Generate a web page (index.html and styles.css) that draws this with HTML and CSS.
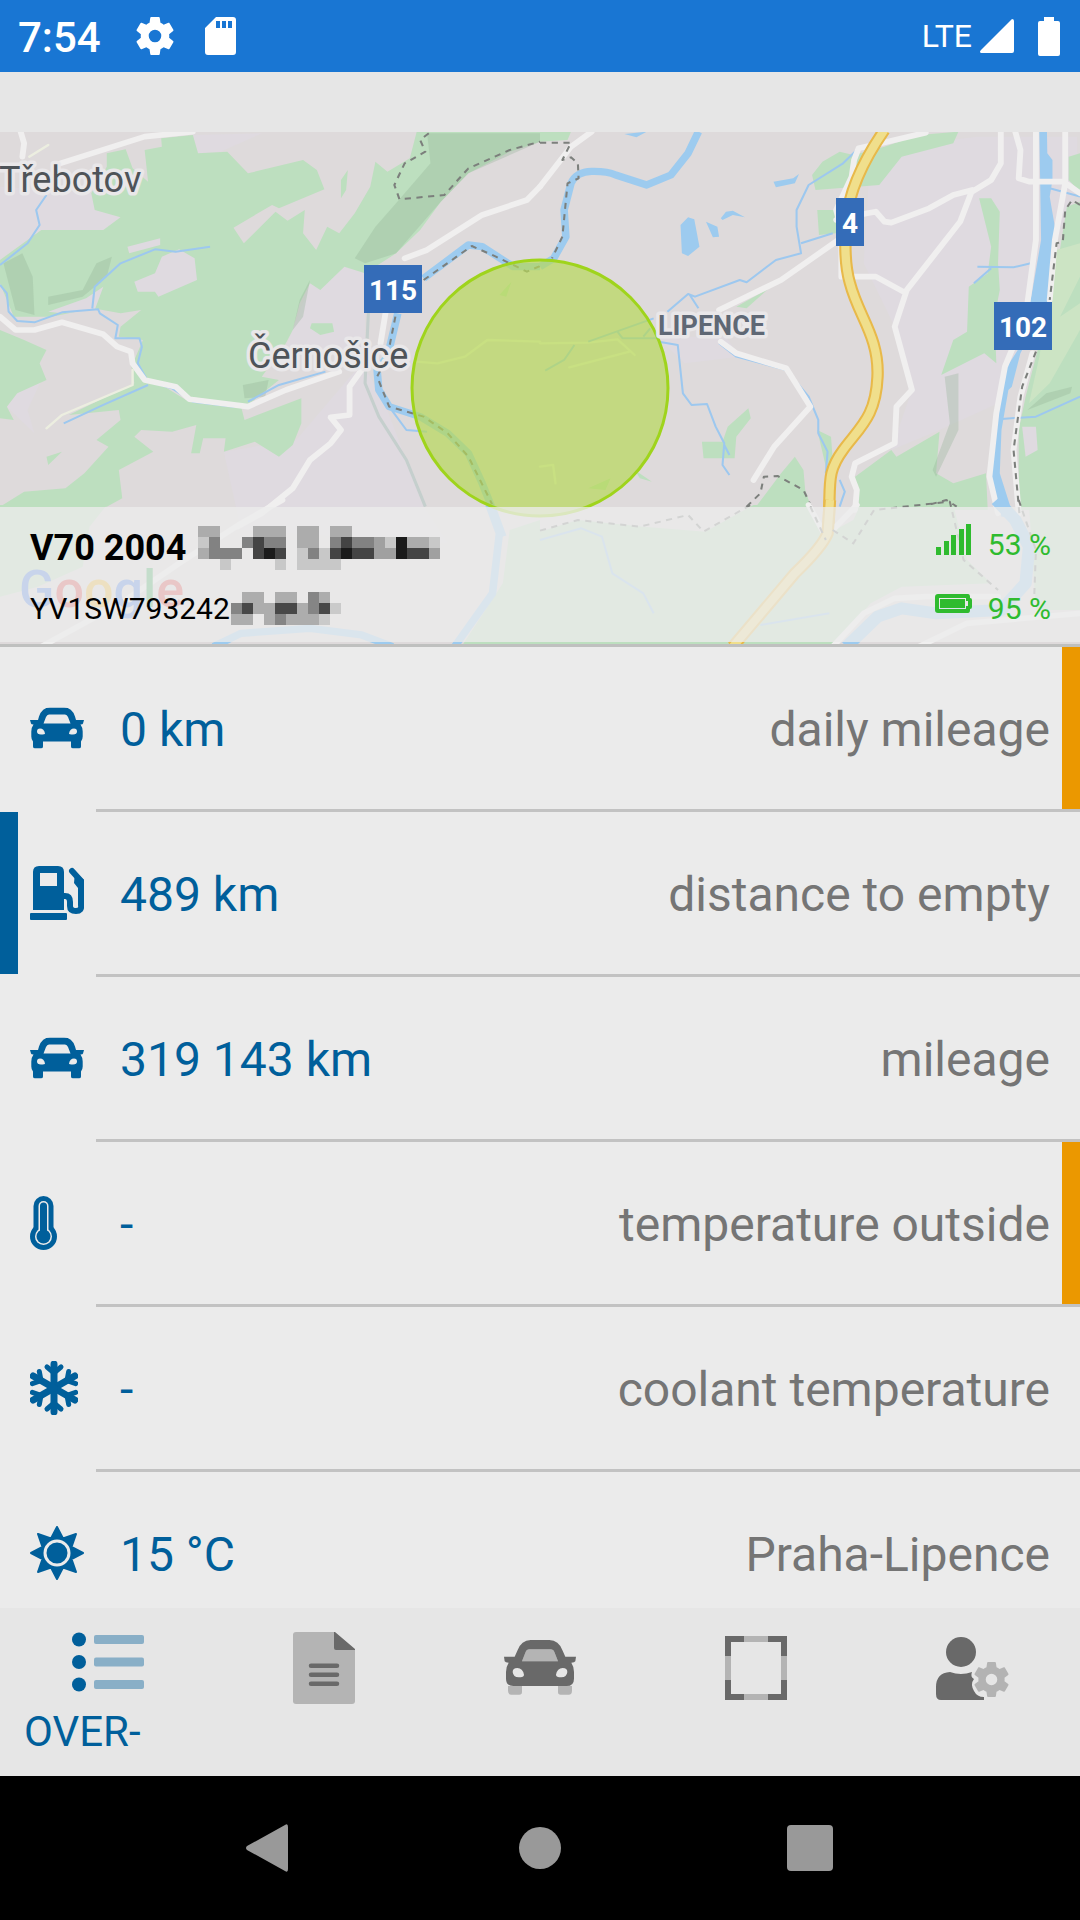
FILE: index.html
```html
<!DOCTYPE html>
<html lang="en">
  <head>
    <meta charset="UTF-8" />
    <meta name="viewport" content="width=device-width, initial-scale=1.0" />
    <title>Car overview</title>
    <link rel="stylesheet" href="styles.css">
  </head>
  <body>
    <svg class="symbols" aria-hidden="true">
      <symbol id="gear" viewBox="2 2 20 20">
        <path d="M19.43 12.98c.04-.32.07-.64.07-.98s-.03-.66-.07-.98l2.11-1.65c.19-.15.24-.42.12-.64l-2-3.46c-.12-.22-.39-.3-.61-.22l-2.49 1c-.52-.4-1.08-.73-1.69-.98l-.38-2.65C14.46 2.18 14.25 2 14 2h-4c-.25 0-.46.18-.49.42l-.38 2.65c-.61.25-1.17.59-1.69.98l-2.49-1c-.23-.09-.49 0-.61.22l-2 3.46c-.13.22-.07.49.12.64l2.11 1.65c-.04.32-.07.65-.07.98s.03.66.07.98l-2.11 1.65c-.19.15-.24.42-.12.64l2 3.46c.12.22.39.3.61.22l2.49-1c.52.4 1.08.73 1.69.98l.38 2.65c.03.24.24.42.49.42h4c.25 0 .46-.18.49-.42l.38-2.65c.61-.25 1.17-.59 1.69-.98l2.49 1c.23.09.49 0 .61-.22l2-3.46c.12-.22.07-.49-.12-.64l-2.11-1.65zM12 15.3a3.3 3.3 0 1 1 0-6.6 3.3 3.3 0 0 1 0 6.6z" />
      </symbol>
      <symbol id="car" viewBox="0 0 54 41">
        <path fill-rule="evenodd" d="M0 12.5H8L9 9Q12 0 20 0H34Q42 0 45 9L46 12.5H54L53 16Q53 17 50.5 17Q52.7 20 52.7 24V29Q52.7 32 51 34V39Q51 41 49 41H43Q41 41 41 39V34H13V39Q13 41 11 41H5Q3 41 3 39V34Q1.3 32 1.3 29V24Q1.3 20 3.5 17Q1 17 1 16ZM13.5 16H40.5L38 9.5Q37 7 35 7H19Q17 7 16 9.5ZM7 24Q7 27 11 27T15 26Q14 21 10 21Q7 21 7 24ZM47 24Q47 27 43 27T39 26Q40 21 44 21Q47 21 47 24Z" />
      </symbol>
    </svg>

    <header class="status-bar">
      <span class="clock">7:54</span>
      <svg class="status-gear"><use href="#gear" /></svg>
      <svg class="status-card" viewBox="0 0 32 38">
        <path fill-rule="evenodd" d="M11 0H28Q31 0 31 3V35Q31 38 28 38H3Q0 38 0 35V11ZM11 4V11H15V4ZM17 4V11H21V4ZM23 4V11H27V4Z" />
      </svg>
      <span class="network">LTE</span>
      <svg class="status-signal" viewBox="0 0 34 34"><path d="M32 0Q34 0 34 2V32Q34 34 32 34H1Q-1 33 1 31Z" /></svg>
      <svg class="status-battery" viewBox="0 0 22 39"><path d="M6 0H16V4H20Q22 4 22 6V37Q22 39 20 39H2Q0 39 0 37V6Q0 4 2 4H6Z" /></svg>
    </header>

    <section class="map">
      <svg class="map-canvas" viewBox="0 0 1080 512" aria-label="Map of the car position">
        <rect width="1080" height="512" fill="#dedadb" />

        <!-- west half -->
        <g transform="translate(0 -2) scale(.3444 .3333)">
          <g class="town">
            <path d="M0 170L270 190 280 240 350 262 300 300 120 300 0 390ZM560 15L760 10 640 65 575 70ZM1060 430L1000 410 930 480 900 460 850 600 830 650 1060 680ZM120 750L80 840 100 910 20 830 50 790ZM650 965L860 930 1050 700 1110 800 1230 1130 1300 1240 700 1200Z" />
          </g>
          <g class="wood">
            <path d="M310 70L365 58 385 115 430 155 420 60 470 50 468 25 560 15 575 70 660 65 720 130 880 90 920 120 942 178 810 235 790 225 678 293 708 340 800 245 835 272 885 240 880 310 918 360 950 290 985 310 1030 250 1075 170 1090 95 1125 125 1190 85 1210 5H1568V35L1480 65 1360 130 1280 215 1220 300 1150 370 1060 430 1000 410 930 480 900 460 870 520 850 600 830 640 760 740 810 750 720 825 550 800 510 765 415 745 390 690 415 630 345 620 350 590 410 540 350 550 270 535 150 560 40 560 20 510 0 460V390L120 300 300 300 350 262 275 240 265 190 310 110Z" />
            <path d="M0 600L70 630 135 660 115 700 135 750 50 790 20 830 40 870 0 865ZM380 700L390 760 200 855 345 840 350 870 280 930 315 950 245 1030 190 1075 70 1085 0 1130H310L355 1105 345 1020 445 965 390 920 410 900 500 905 570 885 555 970 580 970 590 925 655 925 650 965 740 935 810 980 850 945 875 880V805L710 870 700 830 540 810 470 765 415 750ZM135 980L180 965 140 1005ZM905 580L965 580 970 605 930 615 900 595ZM990 150L1010 120 1005 180 990 205ZM1450 495L1485 455 1470 500Z" />
          </g>
          <path class="hill" d="M140 500L240 480 280 400 325 380 310 440 240 500 140 525ZM10 400L65 370 95 440 100 555 45 540ZM1240 10H1568V35L1360 130 1280 215 1150 370 1060 400 1030 385 1090 290 1150 220 1250 100ZM900 450L870 510 850 600 880 560ZM705 765L780 750 770 800 710 805Z" />
          <path class="town" d="M390 455L450 430 470 380 520 358 565 385 572 450 460 500 450 485 400 485ZM370 350L465 325 465 345 375 370ZM140 545L250 505 300 470 275 540 180 550Z" />
          <g class="stream">
            <path d="M135 195L105 240 115 285 80 340 0 405M0 465L20 490 25 545 50 573 100 577 180 547 285 538 290 550 342 585 335 625 405 625 412 650 400 700 430 755M268 535L275 470 350 400 450 358 510 365 610 350M430 755L500 775 560 815 680 830M720 815L810 765 945 725M185 880L300 825 430 765M1130 830L1180 900 1240 905" />
          </g>
          <path class="river" d="M1230 445L1360 345 1400 350 1490 410 1568 410M1155 550L1125 680 1095 720 1100 780 1130 830 1220 860 1300 910 1360 970 1400 1060 1435 1150 1460 1220" />
          <g class="rail"><path d="M1070 540L1060 760 1100 860 1180 990 1235 1130" /></g>
          <g class="road">
            <path d="M60 5L70 40 65 80M175 100L420 20 560 5M0 560L45 600 100 600 180 577 300 613 340 650 380 665 385 700 420 750 510 770 550 808 720 830 830 780 985 725M1175 385L1240 360 1400 255 1530 210 1568 170M1120 545L1105 640M1050 720L1015 770V855L960 862 990 900 960 940 900 990 850 1075 760 1150 690 1190" />
            <path class="lane" d="M85 80L140 45M385 720L385 765 180 855 135 895M1210 695L1270 700 1350 680 1415 630 1568 635" />
          </g>
          <path class="border" d="M1245 10L1220 30 1235 65 1175 100 1145 165 1160 208 1290 195 1360 115 1480 60 1568 35M1230 450L1370 348 1440 380 1530 425 1568 408M1148 560L1125 680 1095 740 1130 830 1230 860 1300 910 1360 980 1430 1125" />
        </g>

        <!-- east half -->
        <g transform="translate(540 -2) scale(.3444 .3333)">
          <path class="town" d="M340 620H540L580 680 420 700ZM960 60L1270 20H1560V180L1500 330 1430 600 1330 820 1160 900 1020 960 1080 780 1030 590 940 400Z" />
          <path class="wood" d="M0 5H90L80 30 0 35ZM790 135L820 95 870 65 910 75 1000 50 1100 15 1215 5 1200 40 1050 80 985 165 800 180ZM805 240H860V310L810 315ZM1275 205H1310L1335 245 1330 400 1335 480 1320 560 1325 700 1290 670 1165 735 1200 630 1240 605 1245 470 1300 430 1310 350ZM1535 80L1568 70V185L1535 150ZM1568 215L1530 230 1500 420 1480 520 1440 680 1410 800 1390 900V1140H1568ZM920 1140L915 1040 1020 960 1035 980 1110 935 1160 905 1150 1030 1200 1060 1295 1030 1300 1140ZM570 530L665 475 600 535ZM470 935L530 935 545 890 605 835 612 865 570 920 565 985 475 985ZM805 900L845 920 850 990 830 1010ZM620 1140L700 1030 740 980 765 1020 770 1080 790 1140ZM275 1020L325 1055 290 1045ZM140 1075L205 1045 190 1080Z" />
          <path class="hill" d="M1175 740L1215 730 1215 900 1150 1040 1140 1020 1190 880ZM1415 840L1470 790 1545 770 1540 790Z" />
          <path class="town" d="M1400 890L1440 890 1445 960 1410 980Z" />
          <path class="meadow" d="M1568 340L1500 360 1450 680 1420 820 1480 760 1568 600V520L1510 560 1568 440Z" />
          <g class="stream">
            <path d="M925 55L880 100 780 165 745 240V290L758 370 685 390 600 457 580 450 450 500 430 492 370 545M435 495L460 535M758 340L850 310M345 635L400 645 415 790 440 825 485 822 510 890 535 940 530 1005 550 1035M535 945L550 975M520 640L570 680 715 720 780 800 808 870V910L835 965 830 1030M870 1050L885 1085 870 1130M1270 410L1375 412 1425 400M1310 415L1260 460M1340 867L1440 860 1568 800M1480 175L1568 200" />
          </g>
          <path class="river" d="M0 410L40 385 75 320 70 240 90 160Q105 125 150 124T220 135L310 165 380 135 430 70 460 5" />
          <path class="water" d="M408 285L430 262 448 268 463 350 430 378 412 370ZM482 275L515 290 520 320 502 322ZM525 265L540 245 560 242 595 262 560 255 530 270ZM678 155L735 145 752 132 740 160 685 172ZM245 12L310 5 280 22Z" />
          <path class="water" d="M1450 5H1472L1473 70 1488 90V150L1480 200 1500 320 1495 350 1475 510 1395 670 1370 770 1360 780 1340 900 1335 1030 1375 1160H1340L1310 1040 1315 900 1350 720 1400 640 1430 480 1455 330Z" />
          <g class="road">
            <path d="M0 170L90 50 150 5M1120 8L990 40 925 55 912 90 905 140 860 240 880 320 700 450 520 540M525 635L570 670 715 715 785 830 680 950 620 1050M875 340V440H975L1060 488M860 270L950 250 975 245 1000 275 1020 278 1130 235 1200 195 1255 180 1220 275 1065 480 1030 590 1080 780 1035 830 1030 940 915 1000 905 1040 920 1080 915 1140M1255 185L1310 150 1338 100V5M1380 5L1395 60 1390 145 1420 155H1520L1568 190M1525 5V160L1495 330 1480 510M1440 5V330L1410 560 1350 710 1325 850 1305 1040 1330 1150M1430 670L1395 800 1375 960 1390 1150" />
            <path class="lane" d="M0 640L140 638 225 628 275 675M85 712L260 665M0 1010L38 1005 45 1060" />
          </g>
          <path class="stream" d="M140 635L330 565M340 625H240L225 605M300 620L320 595M15 722L70 690 100 645" />
          <path class="highway-edge" d="M1000 0Q900 150 890 270T900 460C925 560 985 620 980 740S930 890 880 960 845 1060 838 1180" />
          <path class="highway" d="M1000 0Q900 150 890 270T900 460C925 560 985 620 980 740S930 890 880 960 845 1060 838 1180" />
          <path class="border" d="M0 38H90L65 90 90 82 110 100 112 145 80 160 65 320 35 385M1568 225L1545 210 1525 240 1518 335 1500 340 1480 510M1440 665L1400 770 1375 960 1392 1150M600 1130L640 1090 650 1040 690 1038 765 1080 790 1135M1000 1133H1100L1180 1110 1210 1130" />
        </g>

        <!-- strip below the info panel -->
        <g transform="translate(0 368) scale(.3444 .3333)">
          <path class="wood" d="M0 15L310 15 260 80 240 200 110 260 0 290ZM1568 60L1480 90 1460 250 1340 440H1568Z" />
          <path class="river" d="M1420 15L1450 100 1430 280 1320 440M620 440L700 400 900 385 1050 405 1140 440" />
          <path class="road" d="M820 0L700 70 520 190 350 310 120 440" />
        </g>
        <g transform="translate(540 368) scale(.3444 .3333)">
          <path class="wood" d="M0 95L110 60 300 80 480 95 620 15H780L820 110 910 60 930 15H1200L1240 180 1310 250 1050 260 960 310 850 440H0ZM1420 15H1568V330L1440 330Z" />
          <path class="river river-wide" d="M1325 0L1380 60 1420 140 1410 250 1340 330 1150 340 1050 325 980 350 890 440" />
          <path class="road" d="M780 15L830 110M920 15L850 90M850 440L940 340 1030 295 1120 290 1330 290M1100 440L1240 370 1568 340" />
          <path class="stream" d="M0 120L120 85 180 110 210 220 300 280 330 340M640 375L840 340" />
          <path class="highway-edge" d="M842 0L835 100Q820 140 740 220L560 440" />
          <path class="highway" d="M842 0L835 100Q820 140 740 220L560 440" />
          <path class="border" d="M0 92L110 60 290 80 430 45 475 95 620 10M785 20L830 120M850 90L910 130 970 30 1190 5 1230 180 1330 270M1390 0L1440 150 1435 290" />
        </g>

        <circle class="zone" cx="540" cy="256" r="128" />

        <g class="place">
          <text x="-1" y="60">Třebotov</text>
          <text x="248" y="236">Černošice</text>
          <text class="district" x="658" y="203">LIPENCE</text>
        </g>
        <g class="shield">
          <rect x="364" y="133" width="58" height="48" /><text x="393" y="168">115</text>
          <rect x="836" y="66" width="28" height="48" /><text x="850" y="101">4</text>
          <rect x="994" y="170" width="58" height="48" /><text x="1023" y="205">102</text>
        </g>
        <text class="google" x="19" y="475"><tspan fill="#4a7fe8">G</tspan><tspan fill="#e04545">o</tspan><tspan fill="#f0b82c">o</tspan><tspan fill="#4a7fe8">g</tspan><tspan fill="#3aa757">l</tspan><tspan fill="#e04545">e</tspan></text>
      </svg>

      <div class="info">
        <div class="vehicle">
          <div class="vehicle-name">
            <strong>V70 2004</strong>
            <svg class="mosaic mosaic-name" viewBox="0 0 22 4" preserveAspectRatio="none" aria-hidden="true">
              <path fill="#acacac" d="M0 0h2v1h-2zM5 0h3v1h-3zM9 0h2v2h-2zM12 0h2v1h-2zM0 2h1v1h-1zM19 1h2v1h-2z" />
              <path fill="#c8c8c8" d="M0 1h1v1h-1zM2 3h1v1h-1zM7 3h1v1h-1zM9 3h4v1h-4zM17 1h1v1h-1zM21 1h1v1h-1zM9 2h1v1h-1zM11 2h1v1h-1z" />
              <path fill="#828282" d="M1 1h1v2h-1zM2 2h2v1h-2zM4 1h1v1h-1zM6 1h2v1h-2zM10 2h1v1h-1zM12 1h1v1h-1zM14 1h2v1h-2z" />
              <path fill="#a0a0a0" d="M16 1h1v2h-1zM17 2h1v1h-1zM21 2h1v1h-1z" />
              <path fill="#444" d="M5 1h1v2h-1zM12 2h1v1h-1zM13 1h1v1h-1zM14 2h2v1h-2zM19 2h2v1h-2zM7 2h1v1h-1z" />
              <path fill="#1b1b1b" d="M6 2h1v1h-1zM13 2h1v1h-1zM18 1h1v2h-1z" />
            </svg>
          </div>
          <div class="vehicle-vin">
            <span>YV1SW793242</span>
            <svg class="mosaic mosaic-vin" viewBox="0 0 10 3" preserveAspectRatio="none" aria-hidden="true">
              <path fill="#adadad" d="M1 0h2v1h-2zM4 0h2v1h-2zM6 1h1v1h-1zM8 0h1v1h-1zM0 2h2v1h-2zM3 2h5v1h-5zM2 1h2v1h-2z" />
              <path fill="#858585" d="M0 1h1v1h-1zM7 0h1v2h-1zM4 2h1v1h-1z" />
              <path fill="#cacaca" d="M8 2h1v1h-1zM9 1h1v1h-1z" />
              <path fill="#484848" d="M1 1h1v1h-1zM4 1h2v1h-2zM8 1h1v1h-1z" />
            </svg>
          </div>
        </div>
        <div class="levels">
          <div class="level">
            <svg class="level-icon" viewBox="0 0 37 31" aria-label="Signal"><path d="M1 23h5v8h-5zM9 17h5v14h-5zM16 11h5v20h-5zM24 5h5v26h-5zM31 0h5v31h-5z" /></svg>
            <span>53 %</span>
          </div>
          <div class="level">
            <svg class="level-icon" viewBox="0 -6 37 31" aria-label="Battery"><path fill-rule="evenodd" d="M3 0H33Q35 0 35 3V4Q37 4 37 6V13Q37 15 35 15V16Q35 19 33 19H3Q0 19 0 16V3Q0 0 3 0ZM4 4V15H31V12H33V7H31V4ZM5 6H30V14H5Z" /><rect x="5" y="5" width="25" height="9" /></svg>
            <span>95 %</span>
          </div>
        </div>
      </div>
    </section>

    <ul class="readings">
      <li class="reading alert">
        <svg class="reading-icon" viewBox="0 0 54 41"><use href="#car" /></svg>
        <div class="reading-body"><span class="value">0 km</span><span class="label">daily mileage</span></div>
      </li>
      <li class="reading current">
        <svg class="reading-icon" viewBox="0 0 54 54">
          <path fill-rule="evenodd" d="M9 0H28Q34 0 34 6V44H3V6Q3 0 9 0ZM10 7V20H27V7ZM1 47H36Q37 47 37 48V53Q37 54 36 54H1Q0 54 0 53V48Q0 47 1 47ZM45 6L54 14V24L48 22 44 17Z" />
          <path class="hose" d="M33 30H35Q40 30 40 36V40Q40 45 46 45T51 39V15L42 5" />
        </svg>
        <div class="reading-body"><span class="value">489 km</span><span class="label">distance to empty</span></div>
      </li>
      <li class="reading">
        <svg class="reading-icon" viewBox="0 0 54 41"><use href="#car" /></svg>
        <div class="reading-body"><span class="value">319 143 km</span><span class="label">mileage</span></div>
      </li>
      <li class="reading alert">
        <svg class="reading-icon thermometer" viewBox="0 0 27 54">
          <path class="glass" d="M13.5 10V40" /><circle cx="13.5" cy="40.5" r="13.5" />
          <path class="rim" d="M13.5 10V40" /><circle class="rim-bulb" cx="13.5" cy="40.5" r="8.5" />
          <path class="mercury" d="M13.5 10V40" /><circle cx="13.5" cy="40.5" r="7" />
        </svg>
        <div class="reading-body"><span class="value">-</span><span class="label">temperature outside</span></div>
      </li>
      <li class="reading">
        <svg class="reading-icon snowflake" viewBox="0 0 48 54">
          <g id="arm"><path d="M24 27V3" /><path class="twig" d="M17 6L24 12 31 6" /></g>
          <use href="#arm" transform="rotate(60 24 27)" /><use href="#arm" transform="rotate(120 24 27)" />
          <use href="#arm" transform="rotate(180 24 27)" /><use href="#arm" transform="rotate(240 24 27)" />
          <use href="#arm" transform="rotate(300 24 27)" />
        </svg>
        <div class="reading-body"><span class="value">-</span><span class="label">coolant temperature</span></div>
      </li>
      <li class="reading">
        <svg class="reading-icon" viewBox="0 0 54 54">
          <path class="rays" d="M53 27L41.500 33 46 46 33 41.500 27 53 21 41.500 8 46 12.500 33 1 27 12.500 21 8 8 21 12.500 27 1 33 12.500 46 8 41.500 21Z" />
          <circle class="halo" cx="27" cy="27" r="12" />
        </svg>
        <div class="reading-body"><span class="value">15 °C</span><span class="label">Praha-Lipence</span></div>
      </li>
    </ul>

    <nav class="tabs">
      <a class="tab active" href="#overview">
        <svg class="tab-icon" viewBox="0 0 72 72">
          <circle cx="7" cy="7.5" r="7" /><circle cx="7" cy="30" r="7" /><circle cx="7" cy="52.5" r="7" />
          <g class="soft"><rect x="22" y="3" width="50" height="9" rx="2" /><rect x="22" y="25.5" width="50" height="9" rx="2" /><rect x="22" y="48" width="50" height="9" rx="2" /></g>
        </svg>
        <span class="tab-label">OVER-</span>
      </a>
      <a class="tab" href="#logbook" aria-label="Logbook">
        <svg class="tab-icon" viewBox="0 0 72 72">
          <path class="soft" d="M8 0H46L67 18V69Q67 72 64 72H8Q5 72 5 69V3Q5 0 8 0Z" />
          <path d="M46 0H47L67 17V18H48Q46 18 46 16ZM23 31.500H49a2 2 0 0 1 0 4.500H23a2 2 0 0 1 0-4.500ZM23 40.500H49a2 2 0 0 1 0 4.500H23a2 2 0 0 1 0-4.500ZM23 49.500H49a2 2 0 0 1 0 4.500H23a2 2 0 0 1 0-4.500Z" />
        </svg>
      </a>
      <a class="tab" href="#car-detail" aria-label="Car">
        <svg class="tab-icon" viewBox="0 -6 54 54">
          <path class="soft" d="M3 34.5H13.500V39Q13.500 41 11.500 41H5.500Q3 41 3 38ZM40.500 34.500H51V38Q51 41 48.500 41H42.500Q40.500 41 40.500 39ZM13.500 16L16 9.500Q17 7 19 7H35Q37 7 38 9.500L40.500 16Z" />
          <path fill-rule="evenodd" d="M0 12.500H8L10 8Q13 0 20 0H34Q41 0 44 8L46 12.500H54L53.500 16Q53 17 50.500 17Q52.500 20 52.500 24V29Q52.500 34.500 47 34.500H7Q1.500 34.500 1.500 29V24Q1.500 20 3.500 17Q1 17 .5 16ZM13.500 16H40.500L38 9.500Q37 7 35 7H19Q17 7 16 9.500ZM6.500 24Q7 28 11 28T15 26Q14 21 10 21Q6.500 21 6.500 24ZM47.500 24Q47 28 43 28T39 26Q40 21 44 21Q47.500 21 47.500 24Z" />
        </svg>
      </a>
      <a class="tab" href="#zone" aria-label="Zone">
        <svg class="tab-icon frame" viewBox="0 0 72 72">
          <path d="M24 7H8V24M48 7H64V24M8 48V65H24M48 65H64V48" />
          <path class="soft" d="M24 7H48M24 65H48M8 24V48M64 24V48" />
        </svg>
      </a>
      <a class="tab" href="#settings" aria-label="Settings">
        <svg class="tab-icon" viewBox="0 0 72 72">
          <circle cx="25" cy="20" r="15" />
          <path d="M0 55Q0 41 14 40Q25 44 36 40Q34 45 38 47Q34 52 38 59 41 65 48 65V68H5Q0 68 0 62Z" />
          <use class="soft" href="#gear" x="38" y="30" width="35" height="35" />
        </svg>
      </a>
    </nav>

    <footer class="system-bar">
      <button class="system-button" type="button" aria-label="Back"><svg class="system-icon" viewBox="0 0 48 48"><path d="M39 1Q42 -1 42 3V45Q42 49 39 47L1 26Q-1 24 1 22Z" /></svg></button>
      <button class="system-button" type="button" aria-label="Home"><svg class="system-icon" viewBox="0 0 48 48"><circle cx="24" cy="24" r="21" /></svg></button>
      <button class="system-button" type="button" aria-label="Recent apps"><svg class="system-icon" viewBox="0 0 48 48"><rect x="1" y="1" width="46" height="46" rx="4" /></svg></button>
    </footer>
  </body>
</html>
```
FILE: styles.css
```css
:root {
  --blue: #005f9b;
  --status: #1976d3;
  --orange: #eb9800;
  --green: #2fbb2f;
  --bar: #e6e6e6;
  --page: #ebebeb;
  --line: #c2c2c2;
  --muted: #757575;
  --icon: #696969;
}

* {
  margin: 0;
  padding: 0;
  box-sizing: border-box;
}

body {
  display: flex;
  flex-direction: column;
  height: 100vh;
  overflow: hidden;
  background: var(--page);
  font-family: Roboto, sans-serif;
}

svg {
  display: block;
  flex: none;
}

.symbols {
  width: 0;
  height: 0;
  position: absolute;
}

/* status bar */
.status-bar {
  display: flex;
  align-items: center;
  flex: none;
  height: 72px;
  padding: 0 20px 0 18px;
  background: var(--status);
  color: white;
  fill: white;
}

.clock {
  padding-top: 3px;
  font-size: 42px;
  font-weight: 500;
}

.status-gear {
  width: 38px;
  height: 38px;
  margin-left: 35px;
}

.status-card {
  width: 32px;
  height: 38px;
  margin-left: 31px;
}

.network {
  margin-left: auto;
  font-size: 32px;
}

.status-signal {
  width: 34px;
  height: 34px;
  margin-left: 8px;
}

.status-battery {
  width: 22px;
  height: 39px;
  margin-left: 24px;
}

/* map */
.map {
  position: relative;
  flex: none;
  border-top: 60px solid var(--bar);
  border-bottom: 3px solid #bfc0bf;
}

.map-canvas {
  width: 100%;
  height: auto;
  fill: none;
  stroke-linejoin: round;
}

.wood { fill: #bddfbf; }
.town { fill: #dfdae0; }
.hill { fill: #8fae93; fill-opacity: 0.3; }
.meadow { fill: #cce4c4; }
.water { fill: #9dcbef; }
.stream { stroke: #9dc8ef; stroke-width: 6; }
.river { stroke: #9dcbef; stroke-width: 22; }
.river-wide { stroke-width: 36; }
.rail { stroke: #c5cfcd; stroke-width: 9; }
.road { stroke: #f0efef; stroke-width: 17; stroke-linecap: round; }
.lane { stroke: #eceee0; stroke-width: 7; }
.highway-edge { stroke: #e8b94a; stroke-width: 36; }
.highway { stroke: #f0df8c; stroke-width: 24; }
.border { stroke: #7c7f7c; stroke-width: 6; stroke-dasharray: 18 16; }

.zone {
  fill: #b7d955;
  fill-opacity: 0.68;
  stroke: #9fd41c;
  stroke-width: 3;
}

.place text {
  fill: #4e5358;
  stroke: #e9e7e9;
  stroke-width: 7;
  paint-order: stroke;
  font-size: 36px;
}

.place .district {
  fill: #5f6875;
  font-size: 27px;
  font-weight: 700;
}

.shield {
  fill: #346cb8;
  font-size: 28px;
  font-weight: 700;
  text-anchor: middle;
}

.shield text {
  fill: white;
}

.google {
  font-size: 52px;
  font-weight: 500;
}

.info {
  position: absolute;
  left: 0;
  right: 0;
  bottom: 2px;
  display: flex;
  justify-content: space-between;
  height: 135px;
  padding: 7px 29px 0 30px;
  background: rgba(236, 236, 236, 0.78);
}

.vehicle-name,
.vehicle-vin,
.level {
  display: flex;
  align-items: center;
  height: 60px;
}

.vehicle-name {
  margin-top: 4px;
  font-size: 36px;
}

.vehicle-vin,
.level {
  font-size: 30px;
}

.mosaic-name {
  width: 242px;
  height: 44px;
  margin-left: 12px;
}

.mosaic-vin {
  width: 110px;
  height: 33px;
  margin-left: 1px;
}

.levels {
  display: flex;
  flex-direction: column;
  gap: 4px;
  color: var(--green);
  fill: var(--green);
}

.level {
  gap: 16px;
}

.level-icon {
  width: 37px;
  height: 31px;
  margin-bottom: 10px;
}

/* readings */
.readings {
  flex: 1;
  min-height: 0;
  overflow: hidden;
  list-style: none;
}

.reading {
  display: grid;
  grid-template-columns: 66px 1fr;
  align-items: center;
  height: 165px;
  padding-left: 30px;
  background-repeat: no-repeat;
  background-size: 18px 162px;
}

.reading.alert {
  background-image: linear-gradient(var(--orange), var(--orange));
  background-position: right top;
}

.reading.current {
  background-image: linear-gradient(var(--blue), var(--blue));
  background-position: left top;
}

.reading-icon {
  width: 54px;
  height: 54px;
  margin-bottom: 3px;
  fill: var(--blue);
}

.thermometer {
  width: 27px;
}

.snowflake {
  width: 48px;
  stroke: var(--blue);
  stroke-width: 7;
  stroke-linecap: round;
}

.twig {
  fill: none;
  stroke-width: 5;
}

.hose {
  fill: none;
  stroke: var(--blue);
  stroke-width: 6;
  stroke-linecap: round;
}

.glass,
.rim,
.mercury {
  stroke: var(--blue);
  stroke-width: 20;
  stroke-linecap: round;
}

.rim {
  stroke: var(--page);
  stroke-width: 10;
}

.rim-bulb {
  fill: var(--page);
}

.mercury {
  stroke-width: 7;
}

.rays {
  stroke: var(--blue);
  stroke-width: 2;
  stroke-linejoin: round;
}

.halo {
  stroke: var(--page);
  stroke-width: 3;
}

.reading-body {
  display: flex;
  align-items: center;
  justify-content: space-between;
  height: 165px;
  padding: 3px 30px 0 24px;
  border-bottom: 3px solid var(--line);
  font-size: 48px;
}

.value {
  color: var(--blue);
}

.label {
  color: var(--muted);
}

/* tabs */
.tabs {
  display: grid;
  grid-template-columns: repeat(5, 1fr);
  flex: none;
  height: 168px;
  background: var(--bar);
}

.tab {
  display: flex;
  flex-direction: column;
  align-items: center;
  padding: 24px 24px 0;
  color: var(--icon);
  fill: var(--icon);
  text-decoration: none;
}

.tab.active {
  color: var(--blue);
  fill: var(--blue);
}

.tab-icon {
  width: 72px;
  height: 72px;
  overflow: visible;
}

.soft {
  opacity: 0.4;
}

.frame {
  fill: none;
  stroke: var(--icon);
  stroke-width: 6;
}

.tab-label {
  align-self: flex-start;
  margin-top: 3px;
  font-size: 42px;
}

/* system bar */
.system-bar {
  display: flex;
  flex: none;
  height: 144px;
  padding: 0 12.5%;
  background: black;
}

.system-button {
  display: flex;
  flex: 1;
  align-items: center;
  justify-content: center;
  border: none;
  background: none;
}

.system-icon {
  width: 48px;
  height: 48px;
  fill: #999;
}
```
